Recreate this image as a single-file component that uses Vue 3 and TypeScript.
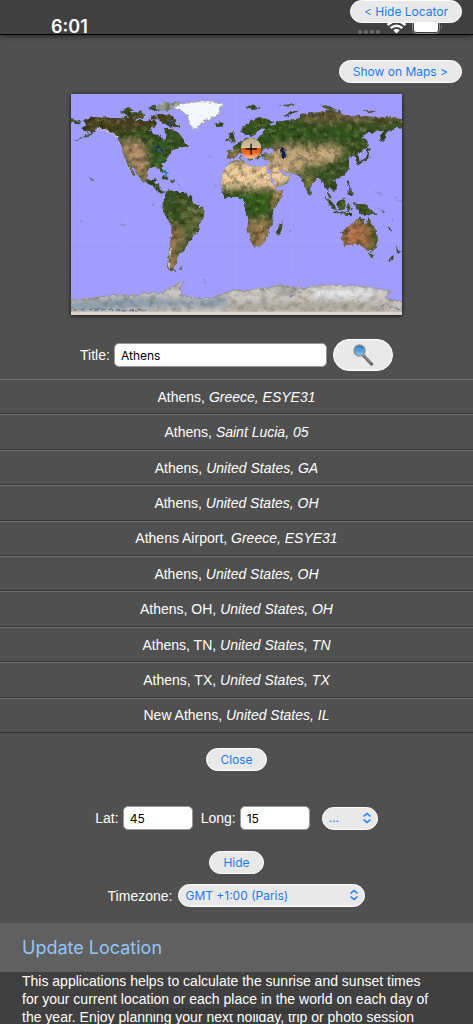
<script setup lang="ts">
import { ref } from 'vue'

interface Place {
  name: string
  region: string
}

const title = ref('Athens')
const latitude = ref('45')
const longitude = ref('15')
const direction = ref('...')
const timezone = ref('GMT +1:00 (Paris)')

const places: Place[] = [
  { name: 'Athens', region: 'Greece, ESYE31' },
  { name: 'Athens', region: 'Saint Lucia, 05' },
  { name: 'Athens', region: 'United States, GA' },
  { name: 'Athens', region: 'United States, OH' },
  { name: 'Athens Airport', region: 'Greece, ESYE31' },
  { name: 'Athens', region: 'United States, OH' },
  { name: 'Athens, OH', region: 'United States, OH' },
  { name: 'Athens, TN', region: 'United States, TN' },
  { name: 'Athens, TX', region: 'United States, TX' },
  { name: 'New Athens', region: 'United States, IL' },
]
</script>

<template>
  <div class="page">
    <header class="status">
      <time class="clock">6:01</time>
      <svg class="signals" width="92" height="14" viewBox="0 -1 92 14" aria-hidden="true">
        <g fill="#6d6d6d">
          <circle cx="3" cy="11" r="2" /><circle cx="9" cy="11" r="2" />
          <circle cx="15" cy="11" r="2" /><circle cx="21" cy="11" r="2" />
        </g>
        <g fill="none" stroke="#fff" stroke-width="2.4">
          <path d="M30.500 4Q39.500 -3.800 48.500 4" />
          <path d="M33.600 7.200Q39.500 2.200 45.400 7.200" />
        </g>
        <path d="M36.300 9.300Q39.500 6.800 42.700 9.300L39.500 12.500Z" fill="#fff" />
        <rect x="55.500" y="-5" width="27" height="17.500" rx="4" fill="none" stroke="#888" />
        <rect x="57" y="-4" width="24" height="15" rx="2.500" fill="#fff" />
        <path d="M84 4q2 1.800 0 4z" fill="#888" />
      </svg>
      <button class="pill locator" type="button">&lt; Hide Locator</button>
    </header>

    <main class="content">
      <div class="actions">
        <button class="pill" type="button">Show on Maps &gt;</button>
      </div>

      <svg class="map" viewBox="33 27 993 663" role="img" aria-label="World map">
        <defs>
          <filter id="coast" x="0" y="0" width="1060" height="720" filterUnits="userSpaceOnUse" color-interpolation-filters="sRGB">
            <feTurbulence type="fractalNoise" baseFrequency="0.09" numOctaves="3" seed="4" result="n" />
            <feDisplacementMap in="SourceGraphic" in2="n" scale="13" xChannelSelector="R" yChannelSelector="G" />
          </filter>
          <filter id="relief" x="0" y="0" width="1060" height="720" filterUnits="userSpaceOnUse" color-interpolation-filters="sRGB">
            <feTurbulence type="fractalNoise" baseFrequency="0.045 0.06" numOctaves="4" seed="9" />
            <feColorMatrix values="0 0 0 0 0.1  0 0 0 0 0.13  0 0 0 0 0.04  2.800 0 0 0 -1.200" />
          </filter>
          <filter id="glow" x="0" y="0" width="1060" height="720" filterUnits="userSpaceOnUse" color-interpolation-filters="sRGB">
            <feTurbulence type="fractalNoise" baseFrequency="0.05 0.07" numOctaves="4" seed="21" />
            <feColorMatrix values="0 0 0 0 1  0 0 0 0 0.88  0 0 0 0 0.7  2.600 0 0 0 -1.200" />
          </filter>
          <filter id="soft" x="0" y="0" width="1060" height="720" filterUnits="userSpaceOnUse">
            <feGaussianBlur stdDeviation="9" />
          </filter>
          <linearGradient id="marker" x1="0" y1="0" x2="0" y2="1">
            <stop offset="0" stop-color="#b9ad8c" /><stop offset="0.460" stop-color="#d3bfa0" />
            <stop offset="0.500" stop-color="#d35a18" /><stop offset="0.720" stop-color="#f06a1b" />
            <stop offset="1" stop-color="#ffc49a" />
          </linearGradient>
          <clipPath id="land">
            <path d="M68 105L100 97 140 98 180 100 200 95 225 104 262 108 285 103 292 118 278 127 270 140 290 150 305 155 312 168 318 152 312 135 318 128 340 135 358 145 372 165 372 174 384 183 367 187 355 190 345 193 330 205 322 215 318 228 305 240 311 260 303 260 297 247 280 246 265 252 260 265 262 280 272 289 285 278 290 282 285 293 297 300 300 315 318 322 306 326 290 317 280 303 262 296 245 288 235 272 220 248 212 242 227 274 218 267 205 240 195 220 188 205 187 185 175 165 160 148 140 135 115 130 95 145 75 158 40 169 75 154 92 142 75 138 68 130 80 120Z" />
            <path d="M314 324L325 315 345 320 375 322 392 336 400 355 433 373 432 390 418 420 414 440 400 450 395 462 380 480 372 497 358 505 350 520 350 530 343 540 341 550 348 558 332 558 322 545 325 510 332 470 335 420 320 400 307 375 308 355 316 340Z" />
            <path d="M180 82L200 74 222 83 245 79 258 92 240 103 207 99 200 89ZM190 72L210 68 223 75 205 80ZM263 69L282 62 303 75 290 82ZM290 87L315 87 335 94 350 112 357 128 342 130 322 120 305 112 290 98ZM270 94L286 92 290 103 275 102ZM290 61L310 53 365 51 350 60 340 66 320 80 300 72ZM33 100L60 112 56 118 33 112ZM373 174L385 181 380 186 370 181ZM465 115L482 111 493 118 484 125 468 122ZM301 272L322 276 325 284 310 280ZM329 286L344 286 344 291 329 292ZM359 546L370 545 369 550 360 550ZM87 276L103 284 101 288Z" />
            <path transform="translate(510 0)" d="M-5 198L12 197 8 185 18 178 30 172 42 163 60 160 85 160 92 150 100 140 112 132 95 130 80 140 76 150 62 155 55 145 45 150 35 142 35 130 55 115 70 103 90 96 110 102 130 112 118 118 128 125 140 112 165 103 180 105 205 100 210 88 240 85 270 82 300 72 330 80 335 90 370 92 400 93 440 97 480 96 516 103 516 130 500 125 490 135 470 138 468 155 453 171 447 155 462 138 440 140 425 143 408 143 398 158 412 168 408 190 395 200 385 208 388 227 380 230 372 212 355 215 358 235 355 255 340 272 325 280 310 282 322 300 318 315 308 320 298 305 293 318 305 340 296 335 285 305 275 285 262 278 245 300 240 315 243 330 235 330 225 305 215 285 205 270 185 265 165 262 148 250 152 262 165 274 183 268 180 280 165 298 138 308 132 295 118 260 114 245 118 228 98 220 92 208 105 205 130 206 128 195 105 190 98 200 88 208 90 222 80 222 75 210 62 205 72 222 65 227 50 208 38 202 25 208 10 222 -6 222Z" />
            <path transform="translate(510 0)" d="M5 228L37 224 50 239 75 245 110 242 116 260 135 303 140 318 160 316 155 335 135 365 128 382 132 415 118 430 112 455 100 475 85 484 70 484 62 465 52 430 55 400 45 375 45 350 35 342 10 337 -10 340 -25 320 -28 300 -25 270 -10 245Z" />
            <path transform="translate(510 0)" d="M2 140L12 141 11 153 21 169 5 176 0 165-5 154ZM-12 158L-2 161-4 170-13 171ZM145 425L158 403 156 430 148 450 138 446ZM333 442L355 425 375 407 385 398 402 402 400 412 410 417 415 395 425 420 440 438 443 465 435 490 425 500 405 490 390 475 360 479 343 485 338 470ZM417 507L430 506 424 519 417 513ZM498 484L513 499 505 506 492 507 490 522 475 530 479 517 501 505Z" />
            <path transform="translate(510 0)" d="M284 333L293 340 312 357 321 376 312 376 300 360 289 345ZM320 355L340 341 348 350 342 374 325 372ZM306 378L330 382 366 386 365 391 325 387 307 382ZM351 354L363 357 358 362 368 379 360 371 356 381 352 378ZM370 355L388 357 406 358 430 380 442 391 422 387 411 393 393 387 379 370ZM350 287L357 287 360 307 351 302ZM357 306L363 309 370 330 362 333 355 327ZM376 237L390 226 402 222 410 209 411 192 422 190 416 201 418 218 400 231 382 242ZM409 164L413 175 410 188 406 176ZM163 95L174 83 193 77 206 80 179 86 171 98ZM48 67L62 61 91 67 80 74 58 73ZM145 60L165 59 184 57 197 60 165 64ZM270 62L287 61 320 73 291 72ZM398 76L438 79 420 84ZM239 316L246 321 244 330ZM454 372L464 382 461 385ZM471 424L484 437 480 440ZM51 221L63 223 61 230ZM31 206L35 218 30 221Z" />
          </clipPath>
          <clipPath id="ice">
            <path d="M33 645L80 642 120 635 180 630 240 632 250 622 300 627 320 615 350 600 375 588 360 605 365 630 410 640 450 640 490 625 520 615 550 617 590 612 620 610 660 600 690 605 730 610 780 600 850 602 920 605 990 620 975 640 1026 650 1026 690 33 690Z" />
          </clipPath>
        </defs>

        <rect x="33" y="27" width="993" height="663" fill="#a09dff" />
        <path d="M198 27V690M363 27V690M529 27V690M694 27V690M860 27V690M33 137H1026M33 248H1026M33 358H1026M33 469H1026M33 579H1026" stroke="#a4a2ff" stroke-width="3" />

        <g filter="url(#coast)">
          <g clip-path="url(#land)">
            <rect x="33" y="27" width="993" height="663" fill="#365021" />
            <g filter="url(#soft)">
              <path d="M60 90H365L350 130 230 130 180 145 60 140Z" fill="#46401e" />
              <path d="M188 165L245 165 262 220 265 280 250 290 210 240 185 205Z" fill="#b28c68" />
              <path d="M258 175H330L318 240 270 245Z" fill="#335b20" />
              <path d="M335 410L360 430 355 480 348 560 318 560 325 450Z" fill="#a57a55" />
              <path d="M375 360L440 360 425 430 380 490 360 480Z" fill="#5b6634" />
              <path d="M720 70H1040V112L840 110 730 112Z" fill="#675c38" />
              <path d="M550 120H905V165L760 170 640 180 550 175Z" fill="#31551d" />
              <path d="M475 232L625 232 650 310 640 312 540 310 475 308Z" fill="#f3cfa0" />
              <path d="M620 230L650 235 700 275 650 315 630 270Z" fill="#f2cda0" />
              <path d="M655 182L750 184 830 180 855 200 820 230 770 245 740 235 720 270 690 260 650 240 610 210Z" fill="#c3a57a" />
              <path d="M735 265L765 260 755 330 735 330Z" fill="#7d7946" />
              <path d="M475 320H640L635 385 570 400 545 350Z" fill="#2f5b18" />
              <path d="M650 305H680L645 380 637 360Z" fill="#b8935e" />
              <path d="M560 405H640L620 495H570Z" fill="#9c7c50" />
              <path d="M835 430L880 400 935 425 955 470 935 490 850 490Z" fill="#ac6e48" />
              <path d="M930 405L960 450 950 510 932 500Z" fill="#59682f" />
              <path d="M500 190L540 195 535 230 500 230Z" fill="#967b49" />
              <path d="M290 50H370V70H290Z" fill="#e7e8ee" />
            </g>
            <rect x="33" y="27" width="993" height="663" filter="url(#relief)" opacity=".5" />
            <rect x="33" y="27" width="993" height="663" filter="url(#glow)" opacity=".25" />
          </g>
          <path d="M345 65L365 56 400 50 450 50 490 58 478 70 480 85 455 100 430 110 420 120 408 136 395 125 385 108 382 90 370 80 345 72Z" fill="#f3f6fb" stroke="#a5a8a0" stroke-width="3" />
          <path d="M110 131Q145 126 172 160" fill="none" stroke="#d9dccf" stroke-width="4" stroke-dasharray="12 3" />
          <path d="M280 183L300 187M290 188V202M302 190L310 199" stroke="#142165" stroke-width="5" />
          <path d="M662 186L676 188 672 200 680 220 668 222 661 200Z" fill="#101c55" />
          <path d="M605 195L618 188 640 193 644 204 620 205Z" fill="#a09dff" />
          <path d="M622 251L648 308" stroke="#a09dff" stroke-width="6" />
          <path d="M310 257L319 267 323 279" fill="none" stroke="#2982a3" stroke-width="7" />
          <path d="M322 105L334 112 328 120" fill="none" stroke="#245879" stroke-width="6" />
          <path d="M325 530L329 552M333 490L329 515" stroke="#c7d7d5" stroke-width="4" />
          <path d="M348 293L360 302 362 311M175 415L190 421 198 417M448 216H460M465 298V305M276 359H282M60 405L65 410M431 580L436 597M693 435L687 438M722 538H726M945 320L970 326M955 372L970 386M1004 338L1026 351M998 405V413" fill="none" stroke="#7777a5" stroke-width="2" />
        </g>
        <g filter="url(#coast)">
          <path d="M33 645L80 642 120 635 180 630 240 632 250 622 300 627 320 615 350 600 375 588 360 605 365 630 410 640 450 640 490 625 520 615 550 617 590 612 620 610 660 600 690 605 730 610 780 600 850 602 920 605 990 620 975 640 1026 650 1026 705 33 705Z" fill="#cbc6c0" stroke="#9a9691" stroke-width="3" />
        </g>
        <g clip-path="url(#ice)">
          <g filter="url(#soft)">
            <path d="M30 650L200 637 400 645 500 632 500 665 300 666 30 678Z" fill="#899bad" />
            <path d="M650 615L730 610 705 625 650 625Z" fill="#898887" />
            <path d="M750 618L850 608 970 615 930 635 770 640Z" fill="#e7e9ed" />
            <path d="M500 658L800 650 1026 662 960 674 500 676Z" fill="#aaa297" />
          </g>
          <g filter="url(#coast)" fill="none" stroke="#606b87" stroke-width="3" stroke-dasharray="14 7">
            <path d="M40 675L130 672 200 677 270 675M690 633L720 622 725 629M960 661L1015 670" />
          </g>
          <rect x="33" y="27" width="993" height="663" filter="url(#relief)" opacity=".2" />
          <rect x="33" y="680" width="993" height="10" fill="#d9d3ca" />
        </g>
        <circle cx="573" cy="190" r="31" fill="url(#marker)" />
        <path d="M557 192H590M573 176V209" stroke="#170f08" stroke-width="4" />
      </svg>

      <form class="search" @submit.prevent>
        <label for="place-title">Title:</label>
        <input id="place-title" v-model="title" class="field wide" type="text" />
        <button class="pill find" type="submit" aria-label="Search">
          <svg width="24" height="24" viewBox="0 0 24 24" aria-hidden="true">
            <defs>
              <linearGradient id="lens" x1="0" y1="0" x2="0" y2="1">
                <stop offset="0" stop-color="#1766b5" /><stop offset="1" stop-color="#8dd0fa" />
              </linearGradient>
            </defs>
            <path d="M12 12L20.500 21" stroke="#5c5c5c" stroke-width="3.200" stroke-linecap="round" />
            <path d="M12 11.500L20 20" stroke="#999" stroke-width="1.200" />
            <circle cx="8.500" cy="7.500" r="5.500" fill="url(#lens)" stroke="#8b949c" stroke-width="1.400" />
            <ellipse cx="7.500" cy="5.500" rx="2.800" ry="1.800" fill="#4f99d8" />
          </svg>
        </button>
      </form>

      <ul class="places">
        <li v-for="(place, i) in places" :key="i">
          <span>{{ place.name }}, <em>{{ place.region }}</em></span>
        </li>
      </ul>

      <button class="pill close" type="button">Close</button>

      <div class="coords">
        <label for="lat">Lat:</label>
        <input id="lat" v-model="latitude" class="field short" type="text" />
        <label class="long" for="long">Long:</label>
        <input id="long" v-model="longitude" class="field short" type="text" />
        <span class="picker small">
          <select v-model="direction" aria-label="Direction">
            <option>...</option>
          </select>
          <svg width="10" height="12" viewBox="0 0 10 12" aria-hidden="true">
            <path d="M1.500 4.500L5 1.500 8.500 4.500M1.500 7.500L5 10.500 8.500 7.500" />
          </svg>
        </span>
      </div>

      <button class="pill hide" type="button">Hide</button>

      <div class="zone">
        <label for="timezone">Timezone:</label>
        <span class="picker large">
          <select id="timezone" v-model="timezone">
            <option>GMT +1:00 (Paris)</option>
          </select>
          <svg width="10" height="12" viewBox="0 0 10 12" aria-hidden="true">
            <path d="M1.500 4.500L5 1.500 8.500 4.500M1.500 7.500L5 10.500 8.500 7.500" />
          </svg>
        </span>
      </div>
    </main>

    <h2 class="banner">Update Location</h2>
    <section class="about">
      <p>This applications helps to calculate the sunrise and sunset times for your current location or each place in the world on each day of the year. Enjoy planning your next holiday, trip or photo session</p>
      <span class="shade"></span>
    </section>
  </div>
</template>

<style>
body {
  margin: 0;
  background: #404040;
}
</style>

<style scoped>
* {
  box-sizing: border-box;
}
.page {
  display: flex;
  flex-direction: column;
  min-height: 100vh;
  background: #404040;
  color: #fff;
  font: 14px/18px "Liberation Sans", Arial, sans-serif;
}
.status {
  position: relative;
  z-index: 1;
  display: flex;
  justify-content: space-between;
  align-items: flex-end;
  height: 35px;
  padding: 0 24px 0 51px;
  background: #404040;
  border-bottom: 1px solid #000;
  box-shadow: 0 1px 5px #222;
}
.clock {
  font: 600 18px/14px Inter, sans-serif;
}
.signals {
  flex: none;
}
.pill {
  height: 23px;
  padding: 0 13px;
  border: 1px solid #fff;
  border-radius: 16px;
  background: #e9e9ea;
  color: #187cf4;
  font: 12px/20px Inter, sans-serif;
  white-space: nowrap;
}
.locator {
  position: absolute;
  top: 0;
  right: 11px;
}
.content {
  display: flex;
  flex-direction: column;
  align-items: center;
  padding: 25px 0 16px;
  background: #505050;
}
.actions {
  align-self: flex-end;
  display: flex;
  padding-right: 11px;
}
.map {
  width: 70%;
  margin-top: 11px;
  box-shadow: 0 1px 4px #111;
}
.search,
.coords,
.zone {
  display: flex;
  align-items: center;
  justify-content: center;
}
.search {
  margin-top: 24px;
}
.field {
  height: 24px;
  margin: 0 0 0 4px;
  padding: 0 6px;
  border: 1px solid #999;
  border-radius: 5px;
  background: #fff;
  color: #000;
  font: 12px/20px Inter, sans-serif;
}
.wide {
  width: 213px;
}
.short {
  width: 70px;
}
.find {
  display: flex;
  align-items: center;
  justify-content: center;
  width: 60px;
  height: 32px;
  margin-left: 6px;
}
.places {
  display: grid;
  grid-auto-rows: 1fr;
  align-self: stretch;
  min-height: 354px;
  margin: 8px 0 0;
  padding: 0;
  list-style: none;
}
.places li {
  display: flex;
  align-items: center;
  justify-content: center;
  border-top: 1px solid #707070;
  border-bottom: 1px solid #353535;
}
.close {
  margin-top: 15px;
}
.coords {
  margin-top: 35px;
}
.long {
  margin-left: 8px;
}
.picker {
  position: relative;
  display: flex;
}
.picker select {
  width: 100%;
  height: 23px;
  padding: 0 6px;
  border: 1px solid #fff;
  border-radius: 12px;
  appearance: none;
  background: #e9e9ea;
  color: #187cf4;
  font: 12px/20px Inter, sans-serif;
}
.picker svg {
  position: absolute;
  top: 5px;
  right: 6px;
  fill: none;
  stroke: #187cf4;
  stroke-width: 1.5;
  pointer-events: none;
}
.small {
  width: 56px;
  margin-left: 12px;
}
.large {
  width: 187px;
  margin-left: 6px;
}
.hide {
  margin-top: 21px;
}
.zone {
  margin-top: 10px;
}
.banner {
  margin: 0;
  padding: 13px 22px 12px;
  background: #606060;
  color: #94c5f5;
  font: 400 18px/24px Inter, sans-serif;
}
.about {
  position: relative;
}
.about p {
  margin: 0;
  padding: 0 40px 0 22px;
}
.shade {
  position: absolute;
  top: 36px;
  left: 153px;
  width: 165px;
  height: 6px;
  border-radius: 3px;
  background: #393939;
}
</style>
